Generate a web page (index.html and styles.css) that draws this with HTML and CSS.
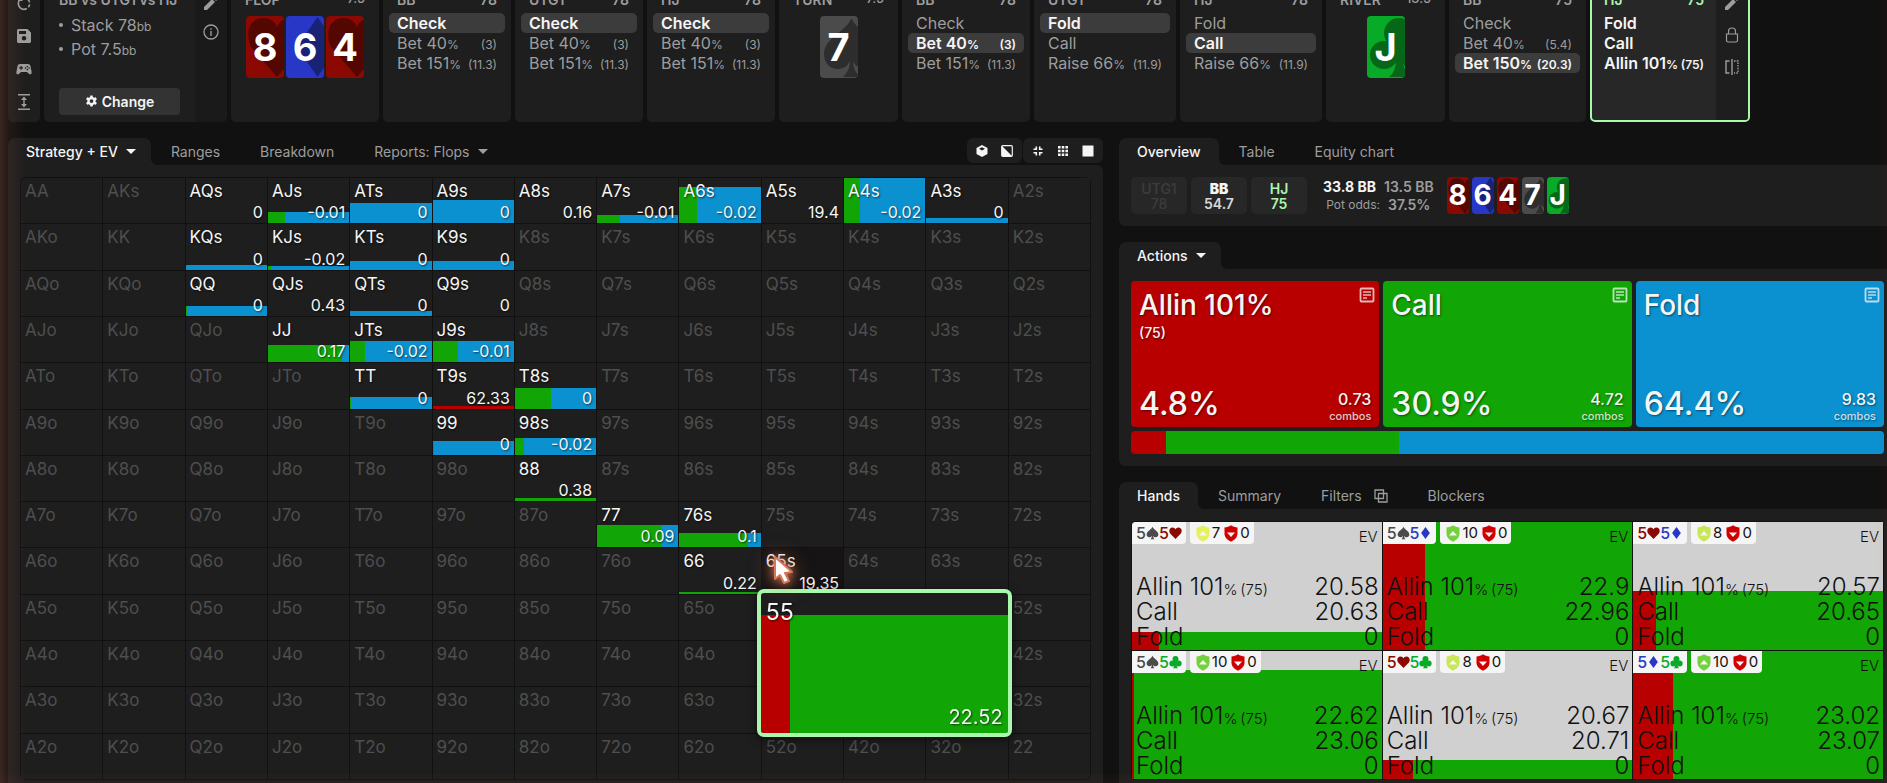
FILE: index.html
```html
<!DOCTYPE html>
<html lang="en">
<head>
<meta charset="utf-8">
<title>Strategy + EV</title>
<link rel="stylesheet" href="styles.css">
</head>
<body>
<svg class="defs" aria-hidden="true">
  <symbol id="big-h" viewBox="0 0 38 62" preserveAspectRatio="none"><path d="M31 61 5 31C-2 15 5 2 17 2c7 0 13 4 14 10C32 6 38 2 45 2c12 0 19 13 12 29z"/></symbol>
  <symbol id="big-d" viewBox="0 0 38 62" preserveAspectRatio="none"><path d="M31.500 1 11 31 31.500 61 52 31z"/></symbol>
  <symbol id="big-s" viewBox="0 0 38 62" preserveAspectRatio="none"><path d="M31.500 2C27 15 4 22 4 38c0 9 6 15 14 15 5 0 10-3 12-8 0 7-3 12-7 16h17c-4-4-7-9-7-16 2 5 7 8 12 8 8 0 14-6 14-15C59 22 36 15 31.500 2z"/></symbol>
  <symbol id="big-c" viewBox="0 0 38 62" preserveAspectRatio="none"><circle cx="32" cy="17" r="15"/><circle cx="17" cy="39" r="14"/><circle cx="47" cy="39" r="14"/><path d="M29 25h7v18c0 8 3 14 7 18H22c5-4 7-10 7-18z"/></symbol>
  <symbol id="s-h" viewBox="0 0 14 14"><path d="M7 13.500 1.200 7.500C-.8 4.500.8 1 3.800 1 5.300 1 6.500 1.900 7 3c.5-1.100 1.700-2 3.200-2 3 0 4.600 3.500 2.600 6.500z"/></symbol>
  <symbol id="s-d" viewBox="0 0 14 14"><path d="M7 .5 2.300 7 7 13.500 11.700 7z"/></symbol>
  <symbol id="s-s" viewBox="0 0 14 14"><path d="M7 .3C6 3.500.7 5 .7 8.700c0 3.400 4.300 4 5.700 1.300 0 1.700-.7 3-1.700 3.800h4.600C8.300 13 7.600 11.700 7.600 10c1.400 2.700 5.700 2.100 5.700-1.300C13.300 5 8 3.500 7 .3z"/></symbol>
  <symbol id="s-c" viewBox="0 0 14 14"><circle cx="7" cy="3.700" r="3.200"/><circle cx="3.600" cy="8.600" r="3.200"/><circle cx="10.400" cy="8.600" r="3.200"/><path d="M5.800 5h2.400v4.500c0 1.800.6 3.200 1.500 4.300H4.300c.9-1.100 1.500-2.500 1.500-4.300z"/></symbol>
  <symbol id="shield-up" viewBox="0 0 14 17"><path d="M7 .3C5 1.800 2.800 2.300.5 2.400v6.400C.5 12.500 3.600 15.300 7 16.700c3.400-1.400 6.500-4.200 6.500-7.900V2.400C11.200 2.300 9 1.800 7 .3z"/><path fill="#f5f5f5" d="M7 6 11 10.500H3z"/></symbol>
  <symbol id="shield-down" viewBox="0 0 14 17"><path d="M7 .3C5 1.800 2.800 2.300.5 2.400v6.400C.5 12.500 3.600 15.300 7 16.700c3.400-1.400 6.500-4.200 6.500-7.900V2.400C11.200 2.300 9 1.800 7 .3z"/><path fill="#f5f5f5" d="M3 7.500h8L7 12z"/></symbol>
  <symbol id="pencil" viewBox="0 0 16 16"><path d="M1 12v3h3l8-8-3-3zM10 3l3 3 1.500-1.500c.5-.5.5-1 0-1.500L13 1.500c-.5-.5-1-.5-1.500 0z"/></symbol>
  <symbol id="note" viewBox="0 0 16 16"><rect x="1.500" y="1.500" width="13" height="13" rx="1" fill="none" stroke="currentColor" stroke-width="1.800"/><path d="M4 5h8M4 8h8M4 11h4" stroke="currentColor" stroke-width="1.500"/></symbol>
</svg>

<header class="strip">
  <nav class="rail" aria-label="Tools">
    <button aria-label="Reset"><svg viewBox="0 0 16 16"><path d="M4 4.500A5.700 5.700 0 1 0 12 4.500" fill="none" stroke="currentColor" stroke-width="1.600" stroke-dasharray="16 2 3 2"/><path d="M6.500 1v5H2z"/></svg></button>
    <button aria-label="Save"><svg viewBox="0 0 16 16"><path fill-rule="evenodd" d="M2.500 1h9L15 4.500v9c0 .8-.7 1.500-1.500 1.500h-11C1.700 15 1 14.300 1 13.500v-11C1 1.700 1.700 1 2.500 1zM3 3v3h7V3zm5 5a2.300 2.300 0 1 0 0 4.600A2.300 2.300 0 0 0 8 8z"/></svg></button>
    <button aria-label="Play"><svg viewBox="0 0 16 16"><path fill-rule="evenodd" d="M4 3h8c1.500 0 2.300 1 2.600 2.500l1 5.500c.3 2.500-1.800 3-3 1.500L11 11H5l-1.600 1.500C2.200 14-.1 13.500.4 11l1-5.500C1.700 4 2.500 3 4 3zm.5 2v1.300H3.200v1.200h1.300v1.300h1.200V7.500H7V6.300H5.700V5zM11.300 4.800a.8.800 0 1 0 0 1.600.8.800 0 0 0 0-1.600zm0 3a.8.800 0 1 0 0 1.600.8.800 0 0 0 0-1.600zM9.500 6.300a.8.800 0 1 0 0 1.600.8.800 0 0 0 0-1.600zm3.600 0a.8.800 0 1 0 0 1.600.8.800 0 0 0 0-1.600z"/></svg></button>
    <button aria-label="Fit height"><svg viewBox="0 0 16 16"><path d="M2 0h12v1.500H2zM2 14.500h12V16H2zM8 2.500 11 6H8.700v4H11l-3 3.500L5 10h2.300V6H5z"/></svg></button>
  </nav>

  <section class="node info">
    <div class="body">
      <h2>BB vs UTG1 vs HJ</h2>
      <ul><li>Stack 78<small>bb</small></li><li>Pot 7.5<small>bb</small></li></ul>
      <button class="change"><svg viewBox="0 0 14 14"><path fill-rule="evenodd" d="M5.800.5h2.400l.4 1.800 1.200.7 1.800-.6 1.200 2.100-1.400 1.300v1.400l1.400 1.300-1.200 2.100-1.800-.6-1.200.7-.4 1.800H5.800l-.4-1.800-1.200-.7-1.800.6-1.200-2.100 1.400-1.300V5.800L1.200 4.500l1.200-2.100 1.800.6 1.200-.7zM7 4.500a2 2 0 1 0 0 4 2 2 0 0 0 0-4z"/></svg>Change</button>
    </div>
    <div class="side">
      <button aria-label="Edit"><svg><use href="#pencil"/></svg></button>
      <button aria-label="Info"><svg viewBox="0 0 16 16"><circle cx="8" cy="8" r="7" fill="none" stroke="currentColor" stroke-width="1.300"/><path d="M7.300 7h1.400v5H7.300zM7.300 4.200h1.400v1.500H7.300z"/></svg></button>
    </div>
  </section>

  <section class="node flop">
    <h2>FLOP <span class="pot">7.5</span></h2>
    <div class="cards">
      <span class="card h"><svg><use href="#big-h"/></svg><b>8</b></span>
      <span class="card d"><svg><use href="#big-d"/></svg><b>6</b></span>
      <span class="card h"><svg><use href="#big-h"/></svg><b>4</b></span>
    </div>
  </section>

  <section class="node">
    <h2>BB <span>78</span></h2>
    <button class="act on">Check</button>
    <button class="act">Bet 40<small>%</small><i>(3)</i></button>
    <button class="act">Bet 151<small>%</small><i>(11.3)</i></button>
  </section>
  <section class="node">
    <h2>UTG1 <span>78</span></h2>
    <button class="act on">Check</button>
    <button class="act">Bet 40<small>%</small><i>(3)</i></button>
    <button class="act">Bet 151<small>%</small><i>(11.3)</i></button>
  </section>
  <section class="node">
    <h2>HJ <span>78</span></h2>
    <button class="act on">Check</button>
    <button class="act">Bet 40<small>%</small><i>(3)</i></button>
    <button class="act">Bet 151<small>%</small><i>(11.3)</i></button>
  </section>

  <section class="node street">
    <h2>TURN <span class="pot">7.5</span></h2>
    <div class="cards"><span class="card s"><svg><use href="#big-s"/></svg><b>7</b></span></div>
  </section>

  <section class="node">
    <h2>BB <span>78</span></h2>
    <button class="act">Check</button>
    <button class="act on">Bet 40<small>%</small><i>(3)</i></button>
    <button class="act">Bet 151<small>%</small><i>(11.3)</i></button>
  </section>
  <section class="node wide">
    <h2>UTG1 <span>78</span></h2>
    <button class="act on">Fold</button>
    <button class="act">Call</button>
    <button class="act">Raise 66<small>%</small><i>(11.9)</i></button>
  </section>
  <section class="node wide">
    <h2>HJ <span>78</span></h2>
    <button class="act">Fold</button>
    <button class="act on">Call</button>
    <button class="act">Raise 66<small>%</small><i>(11.9)</i></button>
  </section>

  <section class="node street">
    <h2>RIVER <span class="pot">13.5</span></h2>
    <div class="cards"><span class="card c"><svg><use href="#big-c"/></svg><b>J</b></span></div>
  </section>

  <section class="node medium">
    <h2>BB <span>75</span></h2>
    <button class="act">Check</button>
    <button class="act">Bet 40<small>%</small><i>(5.4)</i></button>
    <button class="act on">Bet 150<small>%</small><i>(20.3)</i></button>
  </section>

  <section class="node current">
    <div class="body">
      <h2>HJ <span>75</span></h2>
      <button class="act">Fold</button>
      <button class="act">Call</button>
      <button class="act">Allin 101<small>%</small><i>(75)</i></button>
    </div>
    <div class="side">
      <button aria-label="Edit"><svg><use href="#pencil"/></svg></button>
      <button aria-label="Lock"><svg viewBox="0 0 16 16"><path d="M4.500 7V4.500a3.500 3.500 0 0 1 7 0V7M2.500 7h11v6.500c0 1-.5 1.500-1.500 1.500H4c-1 0-1.500-.5-1.500-1.500z" fill="none" stroke="currentColor" stroke-width="1.200"/></svg></button>
      <button aria-label="Compare"><svg viewBox="0 0 16 16"><path d="M5.500 2H2v12h3.500M8 0v16" fill="none" stroke="currentColor" stroke-width="1.400"/><path d="M10 2h4v12h-4" fill="none" stroke="currentColor" stroke-width="1.400" stroke-dasharray="1.500 1.200"/></svg></button>
    </div>
  </section>
</header>

<main class="work">
  <section class="col">
    <div class="tabs">
      <button class="tab on">Strategy + EV <span class="caret"></span></button>
      <button class="tab">Ranges</button>
      <button class="tab">Breakdown</button>
      <button class="tab">Reports: Flops <span class="caret"></span></button>
      <div class="tools">
        <div class="group">
          <button aria-label="3D view"><svg viewBox="0 0 12 12"><path d="M6 0 11.500 3v6L6 12 .5 9V3z"/><path d="M3 3.700 6 5.500l3-1.800L6 2.300z" fill="#1e1e1e"/></svg></button>
          <button aria-label="Contrast"><svg viewBox="0 0 12 12"><rect x=".7" y=".7" width="10.600" height="10.600" rx="1" fill="none" stroke="currentColor" stroke-width="1.200"/><path d="M1 1l10 10H1z"/></svg></button>
        </div>
        <div class="group">
          <button aria-label="Collapse"><svg viewBox="0 0 12 12"><path d="M4.300 1.500v2.800H1.500M7.700 1.500v2.800h2.800M4.300 10.500V7.700H1.500M7.700 10.500V7.700h2.800" fill="none" stroke="currentColor" stroke-width="1.600"/></svg></button>
          <button aria-label="Grid"><svg viewBox="0 0 12 12"><path d="M1 1h2.600v2.600H1zM4.700 1h2.600v2.600H4.700zM8.400 1H11v2.600H8.400zM1 4.700h2.600v2.600H1zM4.700 4.700h2.600v2.600H4.700zM8.400 4.700H11v2.600H8.400zM1 8.400h2.600V11H1zM4.700 8.400h2.600V11H4.700zM8.400 8.400H11V11H8.400z"/></svg></button>
          <button aria-label="Full"><svg viewBox="0 0 12 12"><path d="M.5.5h11v11H.5z"/></svg></button>
        </div>
      </div>
    </div>
    <div class="panel matrix-panel"><div class="matrix" id="matrix"></div></div>
  </section>

  <section class="col right">
    <div class="block">
      <div class="tabs">
        <button class="tab on">Overview</button>
        <button class="tab">Table</button>
        <button class="tab">Equity chart</button>
      </div>
      <div class="panel overview">
        <div class="seat out"><span>UTG1</span><span>78</span></div>
        <div class="seat"><b>BB</b><span>54.7</span></div>
        <div class="seat hero"><span>HJ</span><span>75</span></div>
        <div class="pots">
          <div><b>33.8 BB</b><span>13.5 BB</span></div>
          <div><small>Pot odds:</small><span>37.5%</span></div>
        </div>
        <div class="cards mini">
          <span class="card h"><svg><use href="#big-h"/></svg><b>8</b></span>
          <span class="card d"><svg><use href="#big-d"/></svg><b>6</b></span>
          <span class="card h"><svg><use href="#big-h"/></svg><b>4</b></span>
          <span class="card s"><svg><use href="#big-s"/></svg><b>7</b></span>
          <span class="card c"><svg><use href="#big-c"/></svg><b>J</b></span>
        </div>
      </div>
    </div>

    <div class="block">
      <div class="tabs"><button class="tab on">Actions <span class="caret"></span></button></div>
      <div class="panel actions">
        <div class="tiles">
          <article class="tile red">
            <h3>Allin 101%<svg><use href="#note"/></svg></h3><p>(75)</p>
            <footer><strong>4.8%</strong><span>0.73<small>combos</small></span></footer>
          </article>
          <article class="tile green">
            <h3>Call<svg><use href="#note"/></svg></h3>
            <footer><strong>30.9%</strong><span>4.72<small>combos</small></span></footer>
          </article>
          <article class="tile blue">
            <h3>Fold<svg><use href="#note"/></svg></h3>
            <footer><strong>64.4%</strong><span>9.83<small>combos</small></span></footer>
          </article>
        </div>
        <div class="total"><span class="red" style="width:4.7%"></span><span class="green" style="width:30.9%"></span><span class="blue" style="width:64.4%"></span></div>
      </div>
    </div>

    <div class="block grow">
      <div class="tabs">
        <button class="tab on">Hands</button>
        <button class="tab">Summary</button>
        <button class="tab">Filters <svg class="copy" viewBox="0 0 14 14"><path d="M1 1h8.500v8.500H1zM4.500 4.500H13V13H4.500z" fill="none" stroke="currentColor" stroke-width="1.300"/></svg></button>
        <button class="tab">Blockers</button>
      </div>
      <div class="panel hands-panel"><div class="hands" id="hands"></div></div>
    </div>
  </section>
</main>
<script src="app.js"></script>
</body>
</html>
```

FILE: styles.css
```css
* { box-sizing: border-box; }
body {
  margin: 0;
  height: 100vh;
  overflow: hidden;
  display: flex;
  flex-direction: column;
  background: #111;
  color: #f5f5f5;
  font: 400 14px/20px Inter, "Liberation Sans", sans-serif;
}
/* warm glow along the window edge */
body::after {
  content: "";
  position: fixed;
  inset: 0;
  pointer-events: none;
  background:
    linear-gradient(90deg, rgba(217, 119, 87, .22), rgba(217, 119, 87, .09) 8px, rgba(217, 119, 87, 0) 26px),
    linear-gradient(0deg, rgba(217, 119, 87, .05), rgba(217, 119, 87, 0) 12px),
    linear-gradient(270deg, rgba(217, 119, 87, .03), rgba(217, 119, 87, 0) 12px);
}
.defs { position: absolute; width: 0; height: 0; }
svg { display: block; fill: currentColor; }
button { margin: 0; padding: 0; border: 0; background: none; color: inherit; font: inherit; cursor: pointer; }
h2, h3, p, ul { margin: 0; padding: 0; }

/* history strip */
.strip { display: flex; gap: 4px; margin-top: -16px; padding-left: 8px; color: #9d9d9d; }
.rail, .node { background: #1e1e1e; border-radius: 0 0 5px 5px; }
.rail { flex: 0 0 32px; display: flex; flex-direction: column; align-items: center; gap: 17px; padding-top: 11px; }
.rail svg, .side svg { width: 16px; height: 16px; }
.node { flex: 0 0 128px; padding: 6px 6px 0; }
.node.flop { flex-basis: 148px; }
.node.street { flex-basis: 119px; }
.node.wide { flex-basis: 142px; }
.node.medium { flex-basis: 137px; }
.node.info { flex-basis: 183px; }
.node.current { flex-basis: 160px; border: 2px solid #a9f8ac; background: #272727; }
.node.info, .node.current { display: flex; padding: 0; overflow: hidden; }
.node h2 { display: flex; justify-content: space-between; margin-bottom: 3px; padding: 0 8px; font-size: 14px; line-height: 20px; font-weight: 600; white-space: nowrap; }
.node h2 .pot { font-size: 13px; line-height: 16px; font-weight: 500; }
.body { flex: 1; }
.side { flex: 0 0 32px; display: flex; flex-direction: column; align-items: center; gap: 17px; padding-top: 11px; background: #1a1a1a; }
.current .side { background: #1e1e1e; padding-top: 9px; gap: 16px; }
.info .side { gap: 13px; }
.info .body { padding: 6px 15px 7px; }
.info h2 { padding: 0; }
.info ul { list-style: none; margin-bottom: 27px; font-size: 16px; line-height: 24px; }
.info li { display: flex; align-items: baseline; height: 24px; }
.info li::before { content: ""; align-self: center; width: 4px; height: 4px; margin-right: 8px; border-radius: 50%; background: #9d9d9d; }
.info small { font-size: 12px; }
.change { display: flex; align-items: center; justify-content: center; gap: 4px; width: 100%; height: 27px; border-radius: 4px; background: #333; color: #f5f5f5; font-weight: 600; }
.change svg { width: 13px; height: 13px; }
.act { display: flex; align-items: baseline; width: 100%; height: 20px; padding: 0 8px; border-radius: 5px; font-size: 16px; line-height: 20px; text-align: left; white-space: nowrap; }
.act small { font-size: 12px; line-height: 12px; }
.act i { margin-left: auto; font-size: 12px; line-height: 12px; font-style: normal; }
.act.on { background: #3c3c3c; color: #f5f5f5; font-weight: 600; }
.current .body { padding: 4px 4px 0; }
.current h2 { color: #a9f8ac; }
.current .act { color: #f5f5f5; font-weight: 600; }

.cards { display: flex; justify-content: center; gap: 2px; padding-top: 3px; }
.card { position: relative; display: grid; place-items: center; width: 38px; height: 62px; border-radius: 4px; overflow: hidden; color: #fff; font-size: 38px; line-height: 62px; }
.card svg { position: absolute; inset: 0; width: 100%; height: 100%; }
.card b { position: relative; font-weight: 700; }
.card.h { background: #8b0900; } .card.h svg { color: #540600; }
.card.d { background: #2837c6; } .card.d svg { color: #182277; }
.card.s { background: #4b4b4b; } .card.s svg { color: #2d2d2d; }
.card.c { background: #08ab27; } .card.c svg { color: #056717; }
.mini { padding: 0; gap: 3px; }
.mini .card { width: 22px; height: 37px; font-size: 28px; line-height: 37px; }

/* workspace */
.work { flex: 1; min-height: 0; display: grid; grid-template-columns: minmax(0, 1095fr) minmax(0, 768fr); gap: 16px; padding: 16px 0 0 8px; }
.col { display: flex; flex-direction: column; min-height: 0; }
.right { gap: 16px; }
.tabs { display: flex; height: 27px; color: #9d9d9d; }
.tab { position: relative; display: flex; align-items: center; padding: 0 20px; white-space: nowrap; }
.tab.on { padding: 0 18px; background: #1e1e1e; border-radius: 7px 7px 0 0; color: #f5f5f5; font-weight: 500; }
.tab.on::after { content: ""; position: absolute; left: 100%; bottom: 0; width: 6px; height: 6px; background: radial-gradient(circle at 100% 0, transparent 6px, #1e1e1e 6px); }
.caret { margin: 0 -3px 0 8px; border: 5px solid transparent; border-top-color: currentColor; border-bottom: 0; }
.copy { width: 14px; height: 14px; margin-left: 12px; }
.panel { background: #1e1e1e; }
.tools { display: flex; gap: 1px; margin: 0 0 2px auto; color: #f5f5f5; }
.group { display: flex; align-items: center; gap: 13px; padding: 0 9px; border-radius: 6px; background: #1e1e1e; }
.group svg { width: 12px; height: 12px; }

.matrix-panel { flex: 1; min-height: 0; display: flex; padding: 12px 12px 3px; border-radius: 0 6px 0 0; }
.matrix { flex: 1; display: grid; grid-template: repeat(13, minmax(0, 1fr)) / repeat(13, minmax(0, 1fr)); gap: 1px; padding: 1px; border-radius: 6px; background: #111; }
.cell { position: relative; background: #1e1e1e; color: #4e4e4e; font-size: 17px; line-height: 20px; }
.cell:first-child { border-top-left-radius: 5px; }
.cell:last-child { border-bottom-right-radius: 5px; }
.cell.live { color: #f5f5f5; text-shadow: 1px 1px 2px rgba(0, 0, 0, .6); }
.cell .name { position: absolute; left: 4px; top: 3px; }
.cell .ev { position: absolute; right: 4px; bottom: 1px; font-size: 16px; }
.cell.hover { background: #161414; }
.bar { position: absolute; left: 0; right: 0; bottom: 0; display: flex; background: #0b91d0; }
.bar .r, .red { background: #b80000; }
.bar .g, .green { background: #11a605; }
.blue { background: #0b91d0; }
.cell .zoomed { position: absolute; z-index: 2; left: -5px; top: -6px; width: calc(300% + 11px); height: calc(300% + 12px); border: 4px solid #a9f8ac; border-radius: 7px; overflow: hidden; background: #1e1e1e; box-shadow: 0 2px 10px rgba(0, 0, 0, .6); }
.zoomed .name { left: 5px; top: 7px; font-size: 23px; line-height: 24px; }
.zoomed .ev { right: 5px; bottom: 6px; font-size: 20px; }
.pointer { position: absolute; z-index: 3; left: 10px; top: 7px; width: 24px; height: 30px; overflow: visible; filter: drop-shadow(0 0 5px #d97757) drop-shadow(0 0 10px rgba(217, 119, 87, .5)); }

/* overview */
.overview { display: flex; align-items: flex-start; gap: 4px; padding: 12px; border-radius: 0 0 0 6px; font-weight: 600; }
.seat { width: 56px; height: 37px; display: flex; flex-direction: column; align-items: center; justify-content: center; border-radius: 5px; background: #272727; line-height: 15px; }
.seat span { color: #d8d8d8; }
.seat.out span { color: #3d3d3d; font-weight: 500; }
.seat.hero span { color: #a9f8ac; }
.pots { margin: 1px 9px 0 12px; color: #9d9d9d; line-height: 18px; }
.pots div { display: flex; justify-content: center; gap: 8px; }
.pots b { color: #f5f5f5; font-weight: 700; }
.pots small { font-size: 12px; font-weight: 400; }

/* actions */
.actions { padding: 12px 3px 12px 12px; border-radius: 0 0 0 6px; }
.tiles { display: grid; grid-template-columns: repeat(3, 1fr); gap: 4px; margin-bottom: 4px; }
.tile { display: flex; flex-direction: column; height: 146px; padding: 8px 8px 4px; border-radius: 4px; text-shadow: 1px 1px 2px rgba(0, 0, 0, .5); }
.tile h3 { display: flex; justify-content: space-between; font-size: 28px; line-height: 32px; font-weight: 500; }
.tile h3 svg { width: 16px; height: 16px; margin: -2px -4px 0 0; opacity: .75; }
.tile p { line-height: 24px; font-weight: 500; }
.tile footer { display: flex; justify-content: space-between; align-items: flex-end; margin-top: auto; }
.tile strong { margin-bottom: 4px; font-size: 32px; line-height: 30px; font-weight: 500; }
.tile footer span { font-size: 16px; line-height: 19px; font-weight: 500; text-align: right; }
.tile small { display: block; font-size: 11px; line-height: 14px; opacity: .8; }
.total { display: flex; height: 23px; border-radius: 4px; overflow: hidden; }

/* hands */
.grow { flex: 1; min-height: 0; display: flex; flex-direction: column; }
.hands-panel { flex: 1; min-height: 0; display: flex; padding: 12px 3px 3px 12px; }
.hands { flex: 1; display: grid; grid-template: repeat(2, minmax(0, 1fr)) / repeat(3, minmax(0, 1fr)); gap: 1px; padding: 1px; border-radius: 5px; background: #111; }
.hand { position: relative; display: flex; flex-direction: column; overflow: hidden; background: #d0d0d0; color: #111; }
.hand:first-child { border-top-left-radius: 4px; }
.hand > :not(.bar) { position: relative; }
.top { display: flex; align-items: flex-start; gap: 4px; font-size: 15px; line-height: 22px; }
.pill { display: flex; align-items: center; height: 22px; padding: 0 4px; border-radius: 0 0 4px 4px; background: #f5f5f5; }
.pill:first-child { font-size: 16px; font-weight: 500; border-bottom-left-radius: 0; }
.pill span { display: flex; align-items: center; }
.pill svg { width: 13px; height: 14px; }
.pill .shield { width: 14px; height: 17px; margin: 0 2px 0 4px; }
.pill .shield:first-child { margin-left: 2px; }
.s-h { color: #8b0900; } .s-d { color: #2837c6; } .s-s { color: #4b4b4b; } .s-c { color: #08ab27; }
.lbl { margin: 4px 4px 0 auto; font-weight: 300; }
.lines { margin-top: auto; padding: 0 3px 1px 4px; font-size: 24px; line-height: 25px; font-weight: 300; }
.lines div { display: flex; align-items: baseline; height: 25px; }
.lines small { font-size: 15px; line-height: 15px; }
.lines span { margin-left: auto; }
```

FILE: app.js
```js
const ranks = "AKQJT98765432";
// hand: [ev, bar height %, red %, green %]
const live = {
  AQs: ["0"], AJs: ["-0.01", 26, 0, 21], ATs: ["0", 45, 0, 0], A9s: ["0", 51, 0, 0],
  A8s: ["0.16"], A7s: ["-0.01", 18, 0, 28], A6s: ["-0.02", 80, 0, 21], A5s: ["19.4"],
  A4s: ["-0.02", 100, 0, 20], A3s: ["0", 11, 0, 0],
  KQs: ["0", 11, 0, 0], KJs: ["-0.02", 9, 0, 4], KTs: ["0", 20, 0, 0], K9s: ["0", 18, 0, 0],
  QQ: ["0", 22, 0, 1], QJs: ["0.43"], QTs: ["0", 11, 0, 0], Q9s: ["0"],
  JJ: ["0.17", 37, 0, 91], JTs: ["-0.02", 46, 0, 18], J9s: ["-0.01", 46, 0, 31],
  TT: ["0", 26, 0, 1], T9s: ["62.33", 6, 100, 0], T8s: ["0", 46, 0, 45],
  99: ["0", 31, 0, 1], "98s": ["-0.02", 37, 0, 11], 88: ["0.38", 6, 0, 100],
  77: ["0.09", 49, 0, 79], "76s": ["0.1", 33, 0, 84], 66: ["0.22", 4, 0, 98], "65s": ["19.35"],
  55: ["22.52", 84, 12, 88]
};
const bar = (h, r, g) =>
  h ? `<div class="bar" style="height:${h}%"><span class="r" style="width:${r}%"></span><span class="g" style="width:${g}%"></span></div>` : "";

const pointer = `<svg class="pointer" viewBox="0 0 24 30"><path d="M3 2v22l5-4 4 8 5-2-4-8 7-1z" fill="#fff" stroke="#d97757" stroke-width="2" stroke-linejoin="round"/></svg>`;

let html = "";
for (let r = 0; r < 13; r++) {
  for (let c = 0; c < 13; c++) {
    const name = r === c ? ranks[r] + ranks[r] : c > r ? ranks[r] + ranks[c] + "s" : ranks[c] + ranks[r] + "o";
    const d = live[name];
    // cells under the enlarged hand stay blank
    const covered = r >= 9 && r <= 11 && c >= 9 && c <= 11 && name !== "55";
    const inner = covered ? "" : (d ? bar(d[1], d[2], d[3]) : "") + `<span class="name">${name}</span>` + (d ? `<span class="ev">${d[0]}</span>` : "");
    if (name === "55") html += `<div class="cell live"><div class="zoomed">${inner}</div></div>`;
    else html += `<div class="cell${d ? " live" : ""}${name === "65s" ? " hover" : ""}">${inner}${name === "65s" ? pointer : ""}</div>`;
  }
}
document.getElementById("matrix").innerHTML = html;

// suits, shield colour, count, allin ev, call ev, bar height %, red %
const hands = [
  ["sh", "#e5f15a", 7, "20.58", "20.63", 14, 11],
  ["sd", "#72d13c", 10, "22.9", "22.96", 100, 17],
  ["hd", "#c8e655", 8, "20.57", "20.65", 46, 9],
  ["sc", "#72d13c", 10, "22.62", "23.06", 85, 1],
  ["hc", "#c8e655", 8, "20.67", "20.71", 15, 12],
  ["dc", "#72d13c", 10, "23.02", "23.07", 100, 16]
];
document.getElementById("hands").innerHTML = hands.map(([suits, tone, n, allin, call, h, r]) => `
  <div class="hand">${bar(h, r, 100 - r)}
    <div class="top">
      <div class="pill">${[...suits].map(s => `<span class="s-${s}">5<svg><use href="#s-${s}"/></svg></span>`).join("")}</div>
      <div class="pill"><svg class="shield" style="color:${tone}"><use href="#shield-up"/></svg>${n}<svg class="shield" style="color:#d00000"><use href="#shield-down"/></svg>0</div>
      <span class="lbl">EV</span>
    </div>
    <div class="lines">
      <div>Allin 101<small>%&thinsp;(75)</small><span>${allin}</span></div>
      <div>Call<span>${call}</span></div>
      <div>Fold<span>0</span></div>
    </div>
  </div>`).join("");
```
